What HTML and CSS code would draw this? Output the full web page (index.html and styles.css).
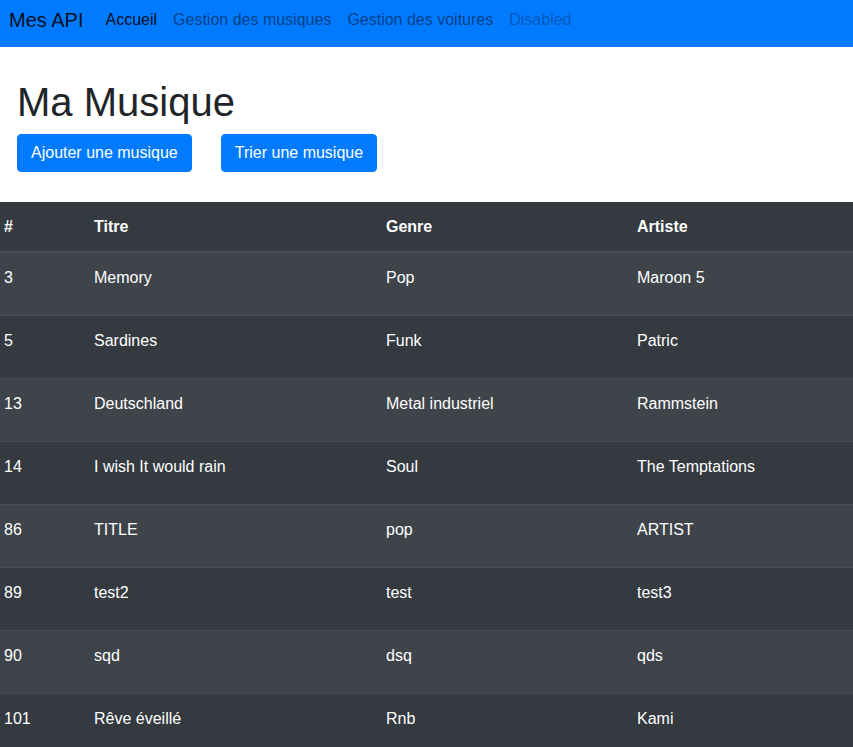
FILE: index.html
```html
<!DOCTYPE html>
<html lang="fr">
<head>
<meta charset="utf-8">
<title>Mes API</title>
<link rel="stylesheet" href="styles.css">
</head>
<body>
<nav class="navbar">
  <a class="brand">Mes API</a>
  <ul class="nav">
    <li><a class="nav-link active">Accueil</a></li>
    <li><a class="nav-link">Gestion des musiques</a></li>
    <li><a class="nav-link">Gestion des voitures</a></li>
    <li><a class="nav-link disabled">Disabled</a></li>
  </ul>
</nav>
<div class="header">
  <h1 class="title">Ma Musique</h1>
  <div class="actions">
    <button class="btn">Ajouter une musique</button>
    <button class="btn">Trier une musique</button>
  </div>
</div>
<table class="table">
  <colgroup>
    <col class="c-id"><col class="c-title"><col class="c-genre"><col class="c-artist">
  </colgroup>
  <thead>
    <tr><th>#</th><th>Titre</th><th>Genre</th><th>Artiste</th></tr>
  </thead>
  <tbody>
    <tr><td>3</td><td>Memory</td><td>Pop</td><td>Maroon 5</td></tr>
    <tr><td>5</td><td>Sardines</td><td>Funk</td><td>Patric</td></tr>
    <tr><td>13</td><td>Deutschland</td><td>Metal industriel</td><td>Rammstein</td></tr>
    <tr><td>14</td><td>I wish It would rain</td><td>Soul</td><td>The Temptations</td></tr>
    <tr><td>86</td><td>TITLE</td><td>pop</td><td>ARTIST</td></tr>
    <tr><td>89</td><td>test2</td><td>test</td><td>test3</td></tr>
    <tr><td>90</td><td>sqd</td><td>dsq</td><td>qds</td></tr>
    <tr><td>101</td><td>Rêve éveillé</td><td>Rnb</td><td>Kami</td></tr>
  </tbody>
</table>
</body>
</html>
```

FILE: styles.css
```css
html, body {
  margin: 0;
  padding: 0;
  overflow: hidden;
}
body {
  font-family: "Liberation Sans", Arial, sans-serif;
  font-size: 16px;
  line-height: 24px;
  color: #212529;
  background: #fff;
  width: 853px;
}
.navbar {
  background: #007bff;
  height: 47px;
  display: flex;
  align-items: flex-start;
  padding: 0 9px;
  box-sizing: border-box;
}
.brand {
  font-size: 20px;
  line-height: 40px;
  color: rgba(0, 0, 0, 0.9);
  margin-right: 14px;
}
.nav {
  list-style: none;
  margin: 0;
  padding: 0;
  display: flex;
}
.nav-link {
  display: block;
  padding: 8px 8px;
  color: rgba(0, 0, 0, 0.5);
}
.nav-link.active { color: rgba(0, 0, 0, 0.9); }
.nav-link.disabled { color: rgba(0, 0, 0, 0.3); }
.header {
  padding: 31px 17px 30px;
}
.title {
  margin: 0 0 8px;
  font-size: 40px;
  line-height: 48px;
  font-weight: 500;
}
.actions {
  display: flex;
  gap: 29px;
}
.btn {
  font-family: inherit;
  font-size: 16px;
  line-height: 24px;
  color: #fff;
  background: #007bff;
  border: 1px solid #007bff;
  border-radius: 4px;
  padding: 6px 13px;
  cursor: pointer;
}
.table {
  border-collapse: collapse;
  table-layout: fixed;
  width: 100%;
  background: #343a40;
  color: #fff;
}
.c-id { width: 82px; }
.c-title { width: 292px; }
.c-genre { width: 251px; }
.table th, .table td {
  text-align: left;
  vertical-align: top;
  padding: 13px 12px 25px;
  border-top: 1px solid #454d55;
}
.table th:first-child, .table td:first-child { padding-left: 4px; }
.table th {
  font-weight: bold;
  padding-top: 13px;
  padding-bottom: 12px;
  border-bottom: 2px solid #454d55;
  border-top: 0;
}
.table tbody tr:nth-child(odd) { background: #3e444a; }
```
